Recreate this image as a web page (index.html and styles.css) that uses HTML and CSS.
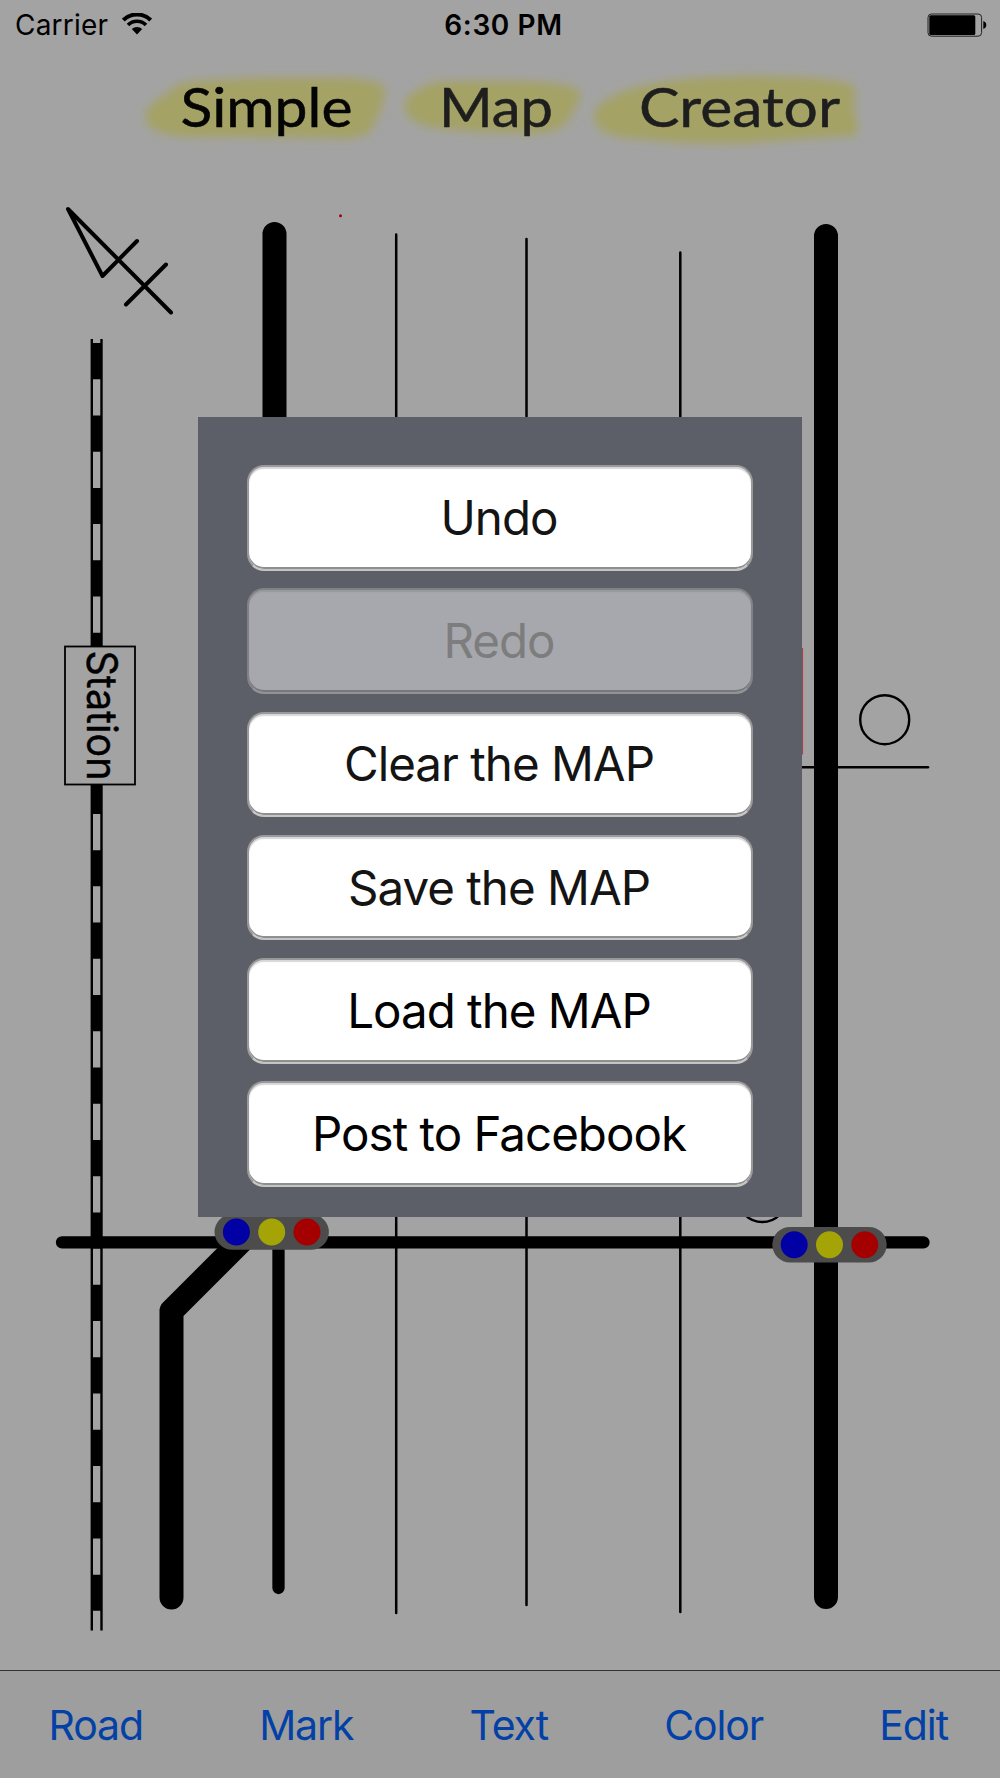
FILE: index.html
```html
<!DOCTYPE html>
<html lang="en">
<head>
<meta charset="utf-8">
<title>Simple Map Creator</title>
<link rel="stylesheet" href="styles.css">
</head>
<body>
<div class="app">
  <header class="status">
    <div class="carrier">
      <span class="carrier-name">Carrier</span>
      <svg class="wifi" width="30" height="23" viewBox="0 0 30 23">
        <path d="M1.3 7.1a19.4 19.4 0 0 1 27.4 0" fill="none" stroke="#000" stroke-width="4"/>
        <path d="M6 12a12.7 12.7 0 0 1 18 0" fill="none" stroke="#000" stroke-width="3.7"/>
        <path d="M9.8 16.1a7.4 7.4 0 0 1 10.4 0L15 21.500z"/>
      </svg>
    </div>
    <span class="time">6:30 PM</span>
    <svg class="battery" width="60" height="24" viewBox="0 0 60 24">
      <rect x="1" y="1" width="53.6" height="22.2" rx="3.5" fill="none" stroke="#222" stroke-width="1"/>
      <rect x="2.3" y="2.2" width="46" height="19.8" rx="1.5"/>
      <path d="M56.3 8c4 1.300 4 6.700 0 8z"/>
    </svg>
  </header>

  <svg class="title" width="1000" height="120" viewBox="0 50 1000 120">
    <defs>
      <filter id="soft" x="-10%" y="-25%" width="120%" height="150%"><feGaussianBlur stdDeviation="5"/></filter>
    </defs>
    <g class="marker" filter="url(#soft)">
      <path d="M146 121C141 105 165 97 180 83Q235 76 345 78Q384 80 386 90Q383 109 370 132Q355 141 330 138Q260 137 185 137Q150 134 146 121z"/>
      <path d="M405 107Q404 96 419 90Q427 81 450 81H520Q580 83 581 94Q577 109 564 126Q545 136 515 133Q460 132 430 127Q405 121 405 107z"/>
      <path d="M594 119Q591 105 622 92Q660 77 750 76Q820 76 852 84Q858 95 853 108Q861 125 855 136Q790 139 750 143Q690 145 642 139Q597 138 594 119z"/>
    </g>
    <text class="word" x="180.500" y="127" textLength="172" lengthAdjust="spacingAndGlyphs">Simple</text>
    <text class="word pale" x="439" y="127" textLength="114" lengthAdjust="spacingAndGlyphs">Map</text>
    <text class="word pale" x="639" y="127" textLength="201" lengthAdjust="spacingAndGlyphs">Creator</text>
  </svg>

  <svg class="map" width="1000" height="1500" viewBox="0 170 1000 1500">
    <g class="compass">
      <path d="M171 312.500L68 209L102.500 276L137 241M126 304.500L166 264.500"/>
    </g>
    <circle cx="340.500" cy="215.700" r="1.500" fill="#a00018"/>

    <g class="lane">
      <path d="M396.200 234.500V1613M526.500 239V1605M680.300 252.500V1612"/>
      <path d="M700 767.300H928"/>
    </g>
    <path class="street" d="M62 1242.300H923.500M278.500 1242V1588"/>
    <path class="road" d="M274.500 234V1208L171.500 1311V1597.500M826 236V1597"/>

    <path class="rail-edge" d="M91.800 339V1630.500M101.500 339V1630.500"/>
    <path class="rail-tie" d="M96.500 343V1612"/>

    <rect class="station" x="65" y="646.500" width="70" height="138"/>
    <text class="station-name" transform="translate(87 650.500) rotate(90)" textLength="130" lengthAdjust="spacingAndGlyphs">Station</text>

    <path d="M802.300 648V754.500" stroke="#b04045" stroke-width="1.500"/>
    <circle class="ring" cx="884.700" cy="719.700" r="24.500"/>
    <circle class="ring" cx="762.300" cy="1197.500" r="24.500"/>

    <g transform="translate(271.700 1232)">
      <rect class="signal" x="-57.200" y="-17.800" width="114.400" height="35.600" rx="17.800"/>
      <circle cx="-35.300" r="13.500" fill="#0000a4"/>
      <circle r="13.500" fill="#a4a407"/>
      <circle cx="35.300" r="13.500" fill="#a40000"/>
    </g>
    <g transform="translate(829.500 1244.700)">
      <rect class="signal" x="-57.200" y="-17.800" width="114.400" height="35.600" rx="17.800"/>
      <circle cx="-35.300" r="13.500" fill="#0000a4"/>
      <circle r="13.500" fill="#a4a407"/>
      <circle cx="35.300" r="13.500" fill="#a40000"/>
    </g>
  </svg>

  <nav class="toolbar">
    <a class="tool">Road</a>
    <a class="tool">Mark</a>
    <a class="tool">Text</a>
    <a class="tool">Color</a>
    <a class="tool">Edit</a>
  </nav>

  <div class="dialog">
    <button class="action dim">Undo</button>
    <button class="action" disabled>Redo</button>
    <button class="action dim">Clear the MAP</button>
    <button class="action dim">Save the MAP</button>
    <button class="action">Load the MAP</button>
    <button class="action">Post to Facebook</button>
  </div>
</div>
</body>
</html>
```
FILE: styles.css
```css
* { box-sizing: border-box; }
body { margin: 0; background: #a3a3a3; font-family: Inter, "Liberation Sans", sans-serif; color: #000; }
svg { display: block; }
.app { position: relative; width: 1000px; height: 1778px; display: flex; flex-direction: column; overflow: hidden; }

.status { height: 50px; display: grid; grid-template-columns: 1fr auto 1fr; align-items: center; padding: 0 13px 0 15px; font-size: 28px; line-height: 50px; }
.carrier { display: flex; align-items: center; gap: 13.5px; }
.carrier-name { letter-spacing: 0.2px; }
.wifi { margin-top: -1px; }
.time { font-weight: 600; letter-spacing: 0.6px; padding-left: 5px; }
.battery { justify-self: end; }

.marker { fill: #a4a265; }
.word { font-family: Lato, sans-serif; font-size: 54px; fill: #050505; stroke: #050505; stroke-width: 0.5; }
.pale { fill: #1e1e1e; stroke: #1e1e1e; }

.map { flex: none; }
.compass { fill: none; stroke: #000; stroke-width: 4; stroke-linecap: round; stroke-linejoin: round; }
.lane { fill: none; stroke: #000; stroke-width: 2.5; stroke-linecap: round; }
.street { fill: none; stroke: #000; stroke-width: 12.3; stroke-linecap: round; }
.road { fill: none; stroke: #000; stroke-width: 24; stroke-linecap: round; stroke-linejoin: round; }
.rail-edge { stroke: #000; stroke-width: 2.4; }
.rail-tie { stroke: #000; stroke-width: 11; stroke-dasharray: 36.2 36.25; }
.station { fill: #a3a3a3; stroke: #000; stroke-width: 1.8; }
.station-name { font-size: 42px; stroke: #000; stroke-width: 0.4; }
.ring { fill: none; stroke: #000; stroke-width: 2.4; }
.signal { fill: #4c4c4c; }

.toolbar { height: 108px; display: flex; justify-content: space-between; align-items: center; padding: 0 52px 0 48.5px; background: #9e9e9e; border-top: 1px solid #333; }
.tool { font-size: 41px; line-height: 50px; letter-spacing: -1.1px; color: #0341a6; }

.dialog { position: absolute; left: 198px; top: 417px; width: 604px; height: 799.5px; padding: 48px 49px 0; display: flex; flex-direction: column; gap: 17.8px; background: #5c5f67; }
.action { height: 105.5px; flex: none; padding: 0 2px 0 0; font: 400 47.5px/60px Inter, "Liberation Sans", sans-serif; letter-spacing: -1px; color: #000; background: #fff; border: 2px solid #999; border-bottom: 2px solid #c4c4c0; border-radius: 17px; box-shadow: inset 0 2px 1px #d8d8d8, inset 0 -2px 0 #8f8f8f; }
.dim { color: #141414; }
.action:disabled { color: #7d7d7d; background: #a7a8ad; border-color: #818285; border-bottom-color: #929397; box-shadow: inset 0 2px 1px #999a9e, inset 0 -2px 0 #77787c; }
```
